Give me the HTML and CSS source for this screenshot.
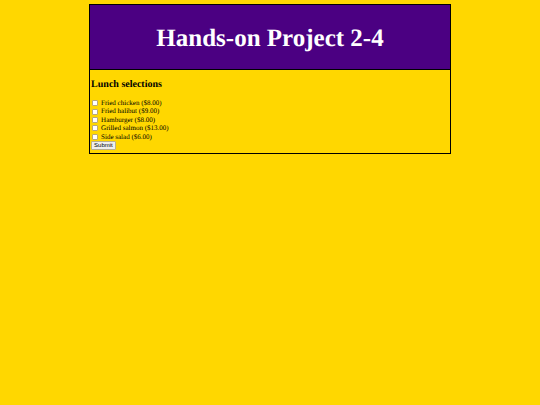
FILE: index.html
```
<!DOCTYPE html>
<html lang="en">
<head>
    <meta charset="UTF-8">
    <meta name="viewport" content="width=device-width, initial-scale=1.0">
    <title>Hands-on Project 2-4</title>
    <link rel="stylesheet" href="styles.css">
</head>
<body>
    <div class="container">
        <header>
            <h1>Hands-on Project 2-4</h1>
        </header>
        <article>
            <h2>Lunch selections</h2>
            <form id="lunchForm">
                <div class="item">
                    <input type="checkbox" id="item1" name="item" value="8">
                    <label for="item1">Fried chicken ($8.00)</label>
                </div>
                <div class="item">
                    <input type="checkbox" id="item2" name="item" value="9">
                    <label for="item2">Fried halibut ($9.00)</label>
                </div>
                <div class="item">
                    <input type="checkbox" id="item3" name="item" value="8">
                    <label for="item3">Hamburger ($8.00)</label>
                </div>
                <div class="item">
                    <input type="checkbox" id="item4" name="item" value="13">
                    <label for="item4">Grilled salmon ($13.00)</label>
                </div>
                <div class="item">
                    <input type="checkbox" id="item5" name="item" value="6">
                    <label for="item5">Side salad ($6.00)</label>
                </div>
                <button type="submit">Submit</button>
            </form>
        </article>
    </div>
</body>
</html>
```

FILE: styles.css
```
* {
    box-sizing: border-box;
}
body {
    margin: 4px 0 0;
    background-color: #ffd700;
    color: #000000;
    font-family: "Liberation Serif", "Times New Roman", serif;
    font-size: 7px;
    line-height: 1.2;
    text-rendering: geometricPrecision;
}
.container {
    width: 67%;
    margin: 0 auto;
    border: 1px solid #000000;
}
header {
    padding: 20px 0 16px;
    border-bottom: 1px solid #000000;
    background-color: #4b0082;
    color: #ffffff;
    text-align: center;
}
article {
    padding: 0 1px 3px;
}
h1 {
    margin: 0;
    font-size: 25px;
    line-height: 28px;
}
h2 {
    margin: 9px 0 8px;
    font-size: 10px;
    line-height: 12px;
}
.item {
    display: flex;
    align-items: center;
    gap: 3px;
}
.item input {
    appearance: none;
    width: 6px;
    height: 6px;
    margin: 0 0 0 1px;
    border: 1px solid #b8a878;
    border-radius: 1px;
    background-color: #ffffff;
}
.item input:checked {
    background-color: #4b0082;
}
button {
    display: block;
    padding: 0 2px;
    border: 1px solid #b8b090;
    border-radius: 1px;
    background-color: #efefef;
    color: #000000;
    font-family: "Liberation Sans", Arial, sans-serif;
    font-size: 6px;
    line-height: 7px;
}
```
